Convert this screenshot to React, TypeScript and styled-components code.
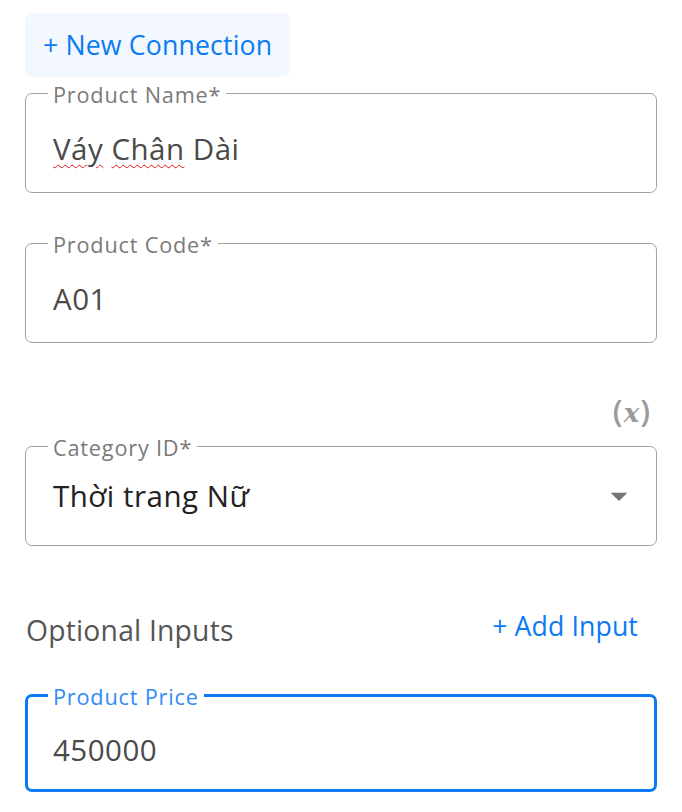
import React from "react";
import styled, { createGlobalStyle, css } from "styled-components";

const Global = createGlobalStyle`
  html, body { margin: 0; padding: 0; background: #ffffff; }
  body { font-family: "Open Sans", "Noto Sans", sans-serif; }
`;

const BLUE = "#0b7bf5";

const Page = styled.div`
  width: 682px;
  box-sizing: border-box;
  padding: 13px 25px 0 25px;
  display: flex;
  flex-direction: column;
  align-items: stretch;
`;

const NewButton = styled.button`
  align-self: flex-start;
  height: 64px;
  padding: 0 18px 0 18px;
  border: none;
  border-radius: 7px;
  background: #f2f8fe;
  color: ${BLUE};
  font-family: "Open Sans", sans-serif;
  font-size: 26.7px;
  letter-spacing: 0.15px;
  line-height: 1;
  cursor: pointer;
`;

const Field = styled.fieldset<{ $focused?: boolean; $mt: number }>`
  margin: ${(p) => p.$mt}px 0 0 0;
  padding: 0 22px 0 22px;
  border: 1px solid #a3a3a3;
  border-radius: 7px;
  min-width: 0;
  ${(p) =>
    p.$focused &&
    css`
      border: 3px solid ${BLUE};
      padding: 0 20px 0 20px;
    `}
`;

const Legend = styled.legend<{ $focused?: boolean }>`
  padding: 4px 5px 0 5px;
  font-size: 21.7px;
  line-height: 26px;
  letter-spacing: 0.8px;
  color: ${(p) => (p.$focused ? "#2f8cf4" : "#7a7a7a")};
  white-space: nowrap;
`;

const rowPadding = {
  text: "21px 5px 23px 5px",
  select: "15px 10px 29px 5px",
  focused: "20px 5px 19px 5px",
};

const ValueRow = styled.div<{ $variant?: keyof typeof rowPadding }>`
  display: flex;
  align-items: center;
  justify-content: space-between;
  padding: ${(p) => rowPadding[p.$variant ?? "text"]};
`;

const Value = styled.span<{ $dark?: boolean }>`
  font-size: 29.5px;
  line-height: 40px;
  letter-spacing: 0.5px;
  color: ${(p) => (p.$dark ? "#222222" : "#4a4a4a")};
  white-space: nowrap;
`;

const Misspelled = styled.span`
  text-decoration: underline wavy #e0191c;
  text-decoration-thickness: 1px;
  text-underline-offset: 4px;
`;

const VarRow = styled.div`
  display: flex;
  justify-content: flex-end;
  margin-top: 48px;
  padding-right: 6px;
  height: 40px;
  align-items: center;
`;

const VarToken = styled.span`
  font-family: "Open Sans", sans-serif;
  font-size: 31px;
  font-weight: 600;
  line-height: 40px;
  color: #9a9a9a;
  letter-spacing: 1px;
`;

const VarX = styled.i`
  font-family: "DejaVu Serif", serif;
  font-style: italic;
  font-weight: 700;
  font-size: 26px;
`;

const SectionRow = styled.div`
  display: flex;
  align-items: center;
  justify-content: space-between;
  margin-top: 64px;
  padding-left: 1px;
  padding-right: 19px;
`;

const SectionTitle = styled.span`
  font-size: 28.3px;
  line-height: 40px;
  letter-spacing: 0.2px;
  color: #555555;
`;

const AddLink = styled.button`
  border: none;
  background: none;
  padding: 0;
  margin-top: -9px;
  color: ${BLUE};
  font-family: "Open Sans", sans-serif;
  font-size: 26.7px;
  letter-spacing: 0.1px;
  line-height: 40px;
  cursor: pointer;
`;

const Caret = () => (
  <svg width="40" height="40" viewBox="0 0 24 24" style={{ marginRight: -15 }}>
    <path d="M7 10l5 5 5-5z" fill="#757575" />
  </svg>
);

export default function App() {
  return (
    <>
      <Global />
      <Page>
        <NewButton>+ New Connection</NewButton>

        <Field $mt={1}>
          <Legend>Product Name*</Legend>
          <ValueRow>
            <Value>
              <Misspelled>Váy</Misspelled> <Misspelled>Chân</Misspelled> Dài
            </Value>
          </ValueRow>
        </Field>

        <Field $mt={35}>
          <Legend>Product Code*</Legend>
          <ValueRow>
            <Value>A01</Value>
          </ValueRow>
        </Field>

        <VarRow>
          <VarToken>
            (<VarX>x</VarX>)
          </VarToken>
        </VarRow>

        <Field $mt={0}>
          <Legend>Category ID*</Legend>
          <ValueRow $variant="select">
            <Value $dark>Thời trang Nữ</Value>
            <Caret />
          </ValueRow>
        </Field>

        <SectionRow>
          <SectionTitle>Optional Inputs</SectionTitle>
          <AddLink>+ Add Input</AddLink>
        </SectionRow>

        <Field $mt={30} $focused>
          <Legend $focused>Product Price</Legend>
          <ValueRow $variant="focused">
            <Value>450000</Value>
          </ValueRow>
        </Field>
      </Page>
    </>
  );
}
